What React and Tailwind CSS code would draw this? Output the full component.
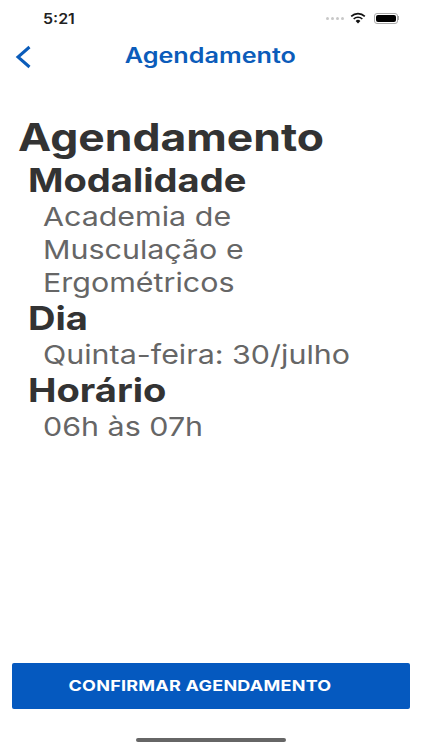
import React from 'react';

const font = "font-['Inter',sans-serif]";

const Section = ({ title, children }) => (
  <div className="pl-[10px]">
    <h2 className="text-[33px] leading-[38px] font-bold text-[#333333] origin-left scale-x-[1.154]">{title}</h2>
    <div className="pl-[15px] pt-[1px]">
      <p className="w-[270px] text-[26px] leading-[33px] text-[#666666] origin-left scale-x-[1.17]">{children}</p>
    </div>
  </div>
);

const StatusBar = () => (
  <div className="h-[36px] flex items-center justify-between pl-[43px] pr-[23px]">
    <span className="text-[14px] font-semibold text-[#222222] origin-left scale-x-[1.14]">5:21</span>
    <div className="flex items-center gap-[5px]">
      <div className="flex gap-[2px]">
        {[0, 1, 2, 3].map((i) => (
          <span key={i} className="w-[3px] h-[3px] rounded-full bg-[#c8c8c8]" />
        ))}
      </div>
      <svg width="16" height="12" viewBox="0 0 16 12" className="ml-[1px]">
        <path d="M8 11.5 5.6 8.9a3.4 3.4 0 0 1 4.8 0L8 11.5Z" fill="#111" />
        <path d="M3.7 7a6.2 6.2 0 0 1 8.6 0" stroke="#111" strokeWidth="1.7" fill="none" />
        <path d="M1.2 4.3a9.8 9.8 0 0 1 13.6 0" stroke="#111" strokeWidth="1.7" fill="none" />
      </svg>
      <div className="flex items-center ml-[3px]">
        <div className="w-[24px] h-[11px] rounded-[3px] border border-[#aaaaaa] p-[1px]">
          <div className="w-full h-full rounded-[2px] bg-black" />
        </div>
        <div className="w-[1px] h-[4px] bg-[#aaaaaa]" />
      </div>
    </div>
  </div>
);

export default function App() {
  return (
    <div className={`${font} w-[422px] h-[750px] bg-white flex flex-col overflow-hidden`}>
      <StatusBar />
      <div className="relative h-[40px] flex items-center justify-center pr-[2px]">
        <svg width="17" height="24" viewBox="0 0 17 24" className="absolute left-[15px] top-[9px]">
          <path d="M14.5 2 3 12l11.5 10" stroke="#0b5cba" strokeWidth="3" fill="none" />
        </svg>
        <h1 className="text-[21px] font-semibold text-[#0b5cba] scale-x-[1.2]">Agendamento</h1>
      </div>
      <div className="pl-[18px] pt-[38px] flex-1">
        <h1 className="text-[38px] leading-[47px] font-bold text-[#333333] origin-left scale-x-[1.17]">Agendamento</h1>
        <Section title="Modalidade">Academia de Musculação e Ergométricos</Section>
        <Section title="Dia">Quinta-feira: 30/julho</Section>
        <Section title="Horário">06h às 07h</Section>
      </div>
      <div className="px-[12px]">
        <button className="w-full h-[46px] rounded-[2px] bg-[#0559bf] text-white pr-[22px]">
          <span className="block text-[15px] font-bold tracking-[0.2px] scale-x-[1.2]">CONFIRMAR AGENDAMENTO</span>
        </button>
      </div>
      <div className="h-[41px] flex justify-center pt-[29px]">
        <div className="w-[150px] h-[4px] rounded-full bg-[#666666]" />
      </div>
    </div>
  );
}
